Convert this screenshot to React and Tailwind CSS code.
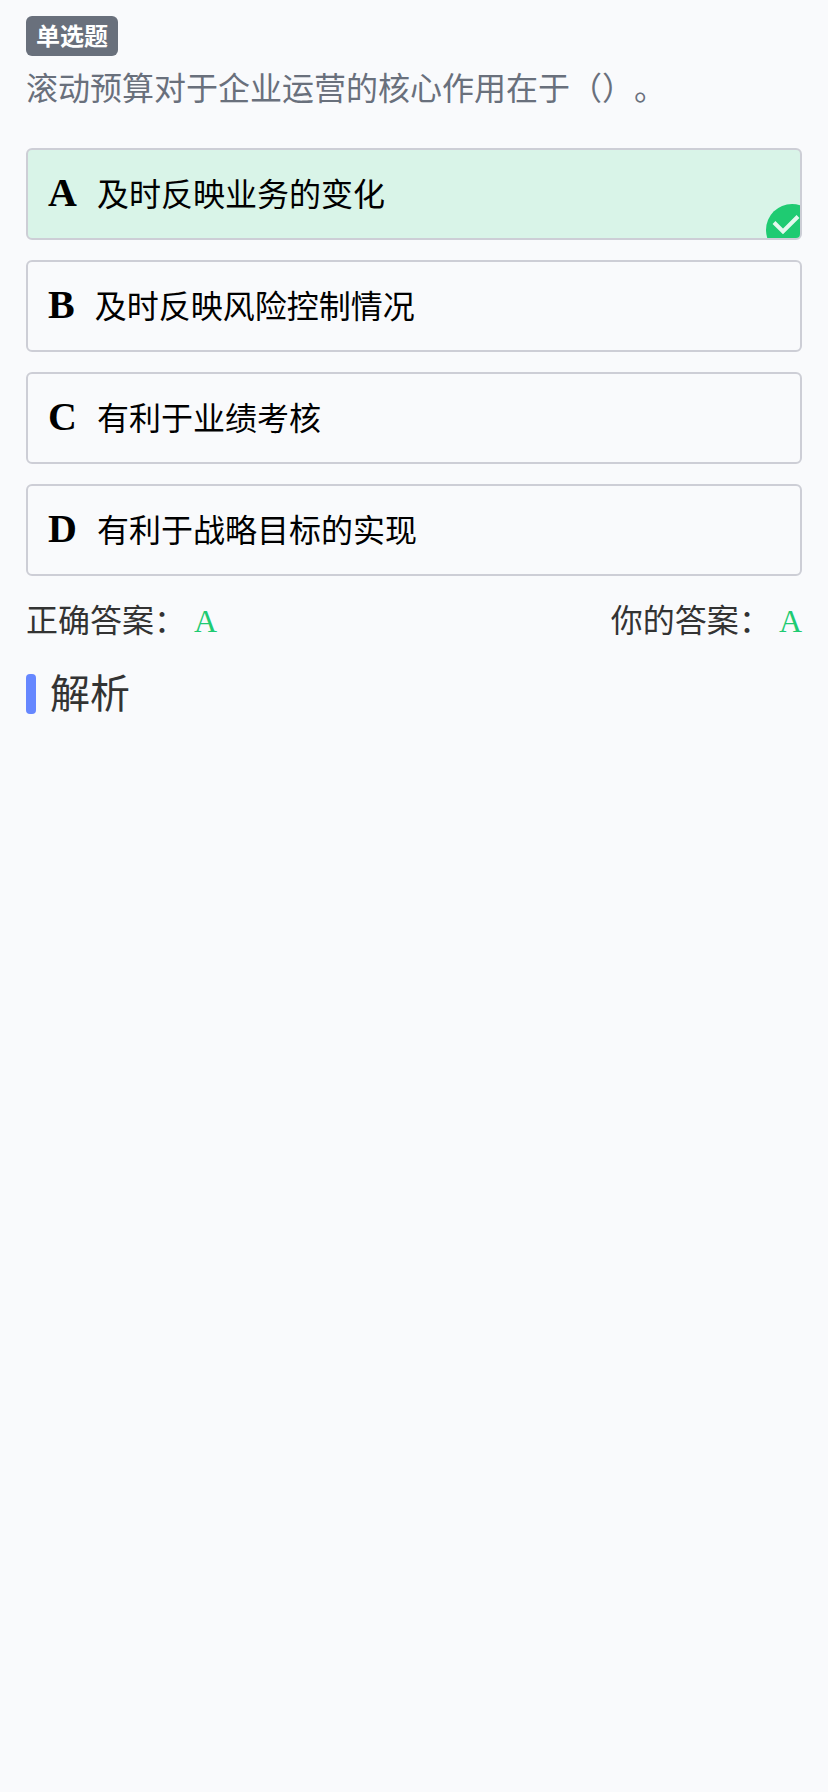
import { useState } from 'react';
import clsx from 'clsx';

const question = {
    type: '单选题',
    title: '滚动预算对于企业运营的核心作用在于（）。',
    answer: 'A',
    options: [
        { key: 'A', text: '及时反映业务的变化' },
        { key: 'B', text: '及时反映风险控制情况' },
        { key: 'C', text: '有利于业绩考核' },
        { key: 'D', text: '有利于战略目标的实现' },
    ],
}

function CheckMark() {
    return (
        <svg className="absolute left-[738px] top-[54px] w-[52px] h-[52px]" viewBox="0 0 52 52" fill="none">
            <circle cx="26" cy="26" r="26" fill="#1fcb72" />
            <path d="M8 18.5 L17 27.5 L32 12.5" stroke="#e4f9ee" strokeWidth="4" />
        </svg>
    )
}

function Answer({ label, value }) {
    return (
        <p className="text-[#333333]">{label}： <span className="text-[#1fcb72]">{value}</span></p>
    )
}

function App() {
    const [selected, setSelected] = useState('A')

    return (
        <div className="min-h-screen bg-[#f9fafc] px-[26px] pt-4 font-['Liberation_Serif','Noto_Sans_CJK_SC',serif] text-[32px] leading-[48px] [text-spacing-trim:space-all]">
            <span className="flex w-fit h-10 items-center rounded-md bg-[#69707c] px-2.5 pt-0.5 text-2xl font-bold text-white">{question.type}</span>
            <h1 className="mt-[9px] text-[#69707c]">{question.title}</h1>

            <ul className="mt-[35px] flex flex-col gap-5">
                {question.options.map((item) => (
                    <li
                        key={item.key}
                        className={clsx(
                            'relative flex h-[92px] items-center gap-5 overflow-hidden rounded-md border-2 border-[#cdced6] px-5 text-black cursor-pointer',
                            selected === item.key && 'bg-[#d9f4e8]'
                        )}
                        onClick={() => setSelected(item.key)}
                    >
                        <b className="pb-0.5 text-[40px]">{item.key}</b>
                        <span className="pt-px">{item.text}</span>
                        {selected === item.key && <CheckMark />}
                    </li>
                ))}
            </ul>

            <div className="mt-[21px] flex justify-between">
                <Answer label="正确答案" value={question.answer} />
                <Answer label="你的答案" value={selected} />
            </div>

            <div className="mt-6 flex items-center gap-3.5">
                <i className="h-10 w-2.5 rounded bg-[#6687ff]" />
                <h2 className="pt-0.5 text-[40px] text-[#333333]">解析</h2>
            </div>
        </div>
    )
}

export default App
